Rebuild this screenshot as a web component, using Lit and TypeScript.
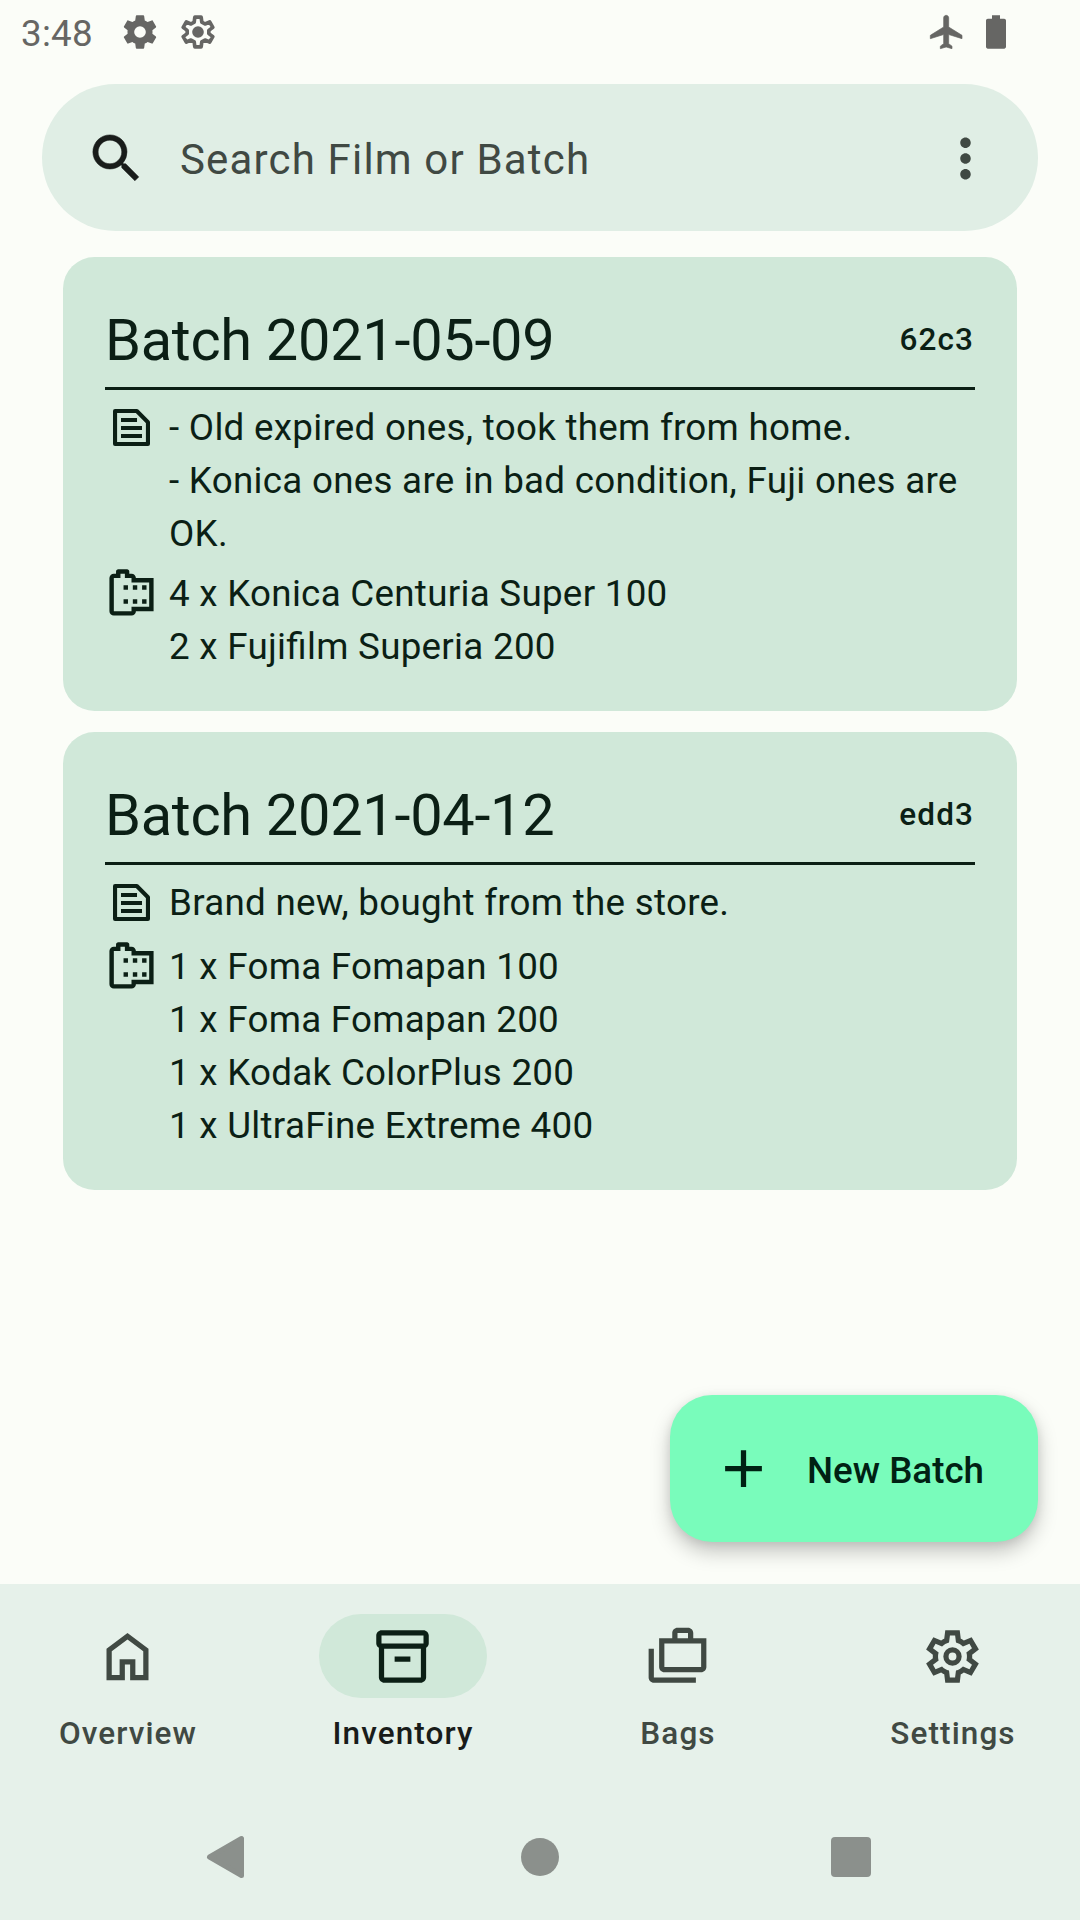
import { LitElement, html, css, svg } from "lit";
import { customElement, property } from "lit/decorators.js";

interface Batch {
  title: string;
  id: string;
  notes: string[];
  films: string[];
}

const BATCHES: Batch[] = [
  {
    title: "Batch 2021-05-09",
    id: "62c3",
    notes: [
      "- Old expired ones, took them from home.",
      "- Konica ones are in bad condition, Fuji ones are OK.",
    ],
    films: ["4 x Konica Centuria Super 100", "2 x Fujifilm Superia 200"],
  },
  {
    title: "Batch 2021-04-12",
    id: "edd3",
    notes: ["Brand new, bought from the store."],
    films: [
      "1 x Foma Fomapan 100",
      "1 x Foma Fomapan 200",
      "1 x Kodak ColorPlus 200",
      "1 x UltraFine Extreme 400",
    ],
  },
];

const GEAR_SOLID =
  "M19.43 12.98c.04-.32.07-.64.07-.98s-.03-.66-.07-.98l2.11-1.65c.19-.15.24-.42.12-.64l-2-3.46c-.12-.22-.39-.3-.61-.22l-2.49 1c-.52-.4-1.08-.73-1.69-.98l-.38-2.65C14.460 2.180 14.250 2 14 2h-4c-.25 0-.46.18-.49.42l-.38 2.65c-.61.25-1.170.59-1.690.98l-2.490-1c-.23-.09-.49 0-.61.22l-2 3.460c-.13.22-.07.49.12.64l2.110 1.650c-.04.32-.07.65-.07.98s.03.66.07.98l-2.110 1.650c-.19.15-.24.42-.12.64l2 3.460c.12.22.39.3.61.22l2.490-1c.52.4 1.080.73 1.690.98l.38 2.650c.03.24.24.42.49.42h4c.25 0 .46-.18.49-.42l.38-2.650c.61-.25 1.170-.59 1.690-.98l2.490 1c.23.09.49 0 .61-.22l2-3.460c.12-.22.07-.49-.12-.64l-2.110-1.650z";

const GEAR_SOFT =
  "M10.100 3.100h3.800l.4 3 1.900 1.100 2.800-1.200 1.900 3.200-2.400 1.850v1.900l2.400 1.850-1.900 3.200-2.800-1.200-1.900 1.100-.4 3h-3.800l-.4-3-1.900-1.100-2.800 1.200-1.900-3.200 2.400-1.850v-1.900L3.100 9.200 5 6l2.800 1.200 1.900-1.100z";

const ICONS = {
  gearSolid: svg`<path fill-rule="evenodd" d="${GEAR_SOLID}M12 15.500a3.500 3.500 0 1 1 0-7 3.500 3.500 0 0 1 0 7z"/>`,
  gearLine: svg`<path d="${GEAR_SOFT}" fill="none" stroke="currentColor" stroke-width="2.200" stroke-linejoin="round"/><circle cx="12" cy="12" r="3.500"/>`,
  plane: svg`<path d="M21 16v-2l-8-5V3.500c0-.83-.67-1.500-1.500-1.500S10 2.670 10 3.500V9l-8 5v2l8-2.500V19l-2 1.500V22l3.500-1 3.500 1v-1.500L13 19v-5.500l8 2.500z" stroke="currentColor" stroke-width=".4"/>`,
  battery: svg`<path d="M16.900 4h-2.500V2H9.600v2H7.100C6.500 4 6 4.500 6 5.100v15.800c0 .6.5 1.100 1.100 1.100h9.800c.6 0 1.100-.5 1.100-1.100V5.100c0-.6-.5-1.100-1.100-1.100z"/>`,
  search: svg`<path d="M15.500 14h-.79l-.28-.27A6.471 6.471 0 0 0 16 9.500 6.500 6.500 0 1 0 9.500 16c1.610 0 3.090-.59 4.230-1.570l.27.28v.79l5 4.990L20.490 19l-4.990-5zm-6 0C7.010 14 5 11.990 5 9.500S7.010 5 9.500 5 14 7.010 14 9.500 11.990 14 9.500 14z" stroke="currentColor" stroke-width=".2"/>`,
  more: svg`<path d="M12 8c1.100 0 2-.9 2-2s-.9-2-2-2-2 .9-2 2 .9 2 2 2zm0 2c-1.100 0-2 .9-2 2s.9 2 2 2 2-.9 2-2-.9-2-2-2zm0 6c-1.100 0-2 .9-2 2s.9 2 2 2 2-.9 2-2-.9-2-2-2z"/>`,
  note: svg`<path d="M4.550 4.550h9.850l5.050 5.050v9.850H4.550z" fill="none" stroke="currentColor" stroke-width="1.850" stroke-linejoin="round"/><path d="M7.250 7.700h7.250v1.800H7.250zM7.250 11.300h9.500v1.800h-9.500zM7.250 14.950h9.500v1.800h-9.500z"/>`,
  roll: svg`<path d="M14 5c0-1.100-.9-2-2-2h-1V2c0-.55-.45-1-1-1H6c-.55 0-1 .45-1 1v1H4c-1.100 0-2 .9-2 2v15c0 1.100.9 2 2 2h8c1.100 0 2-.9 2-2h8V5h-8zm-2 13v2H4V5h3V3h2v2h3v2h8v11h-8z"/><path d="M8.400 8.300h2v2h-2zM12.600 8.300h2v2h-2zM16.800 8.300h2v2h-2zM8.400 14.650h2v2h-2zM12.600 14.650h2v2h-2zM16.800 14.650h2v2h-2z"/>`,
  add: svg`<path d="M19 13h-6v6h-2v-6H5v-2h6V5h2v6h6v2z"/>`,
  home: svg`<path d="M12 3L4 9v12h7v-6h2v6h7V9l-8-6zm6 16h-3v-6H9v6H6v-9l6-4.500 6 4.500v9z"/>`,
  inventory: svg`<path d="M20 2H4c-1 0-2 .9-2 2v3.010c0 .72.43 1.340 1 1.690V20c0 1.100 1.100 2 2 2h14c.9 0 2-.9 2-2V8.700c.57-.35 1-.97 1-1.690V4c0-1.100-1-2-2-2zm-1 18H5V9h14v11zm1-13H4V4h16v3zM9 12h6v2H9z"/>`,
  bags: svg`<path d="M18 5V3c0-1.100-.9-2-2-2h-4c-1.100 0-2 .9-2 2v2H5v11c0 1.100.9 2 2 2h14c1.100 0 2-.9 2-2V5h-5zm-6-2h4v2h-4V3zm9 13H7V7h14v9zM3 9H1v11c0 1.100.9 2 2 2h16v-2H3V9z"/>`,
  settings: svg`<path fill-rule="evenodd" d="M9.250 22l-.4-3.200q-.325-.125-.612-.3-.288-.175-.563-.375L4.700 19.375l-2.750-4.750 2.575-1.950Q4.500 12.500 4.500 12.337v-.675q0-.162.025-.337L1.950 9.375l2.750-4.750 2.975 1.250q.275-.2.575-.375.3-.175.6-.3l.4-3.200h5.500l.4 3.200q.325.125.613.3.287.175.562.375l2.975-1.250 2.750 4.750-2.575 1.950q.025.175.025.337v.675q0 .163-.05.338l2.575 1.950-2.750 4.750-2.950-1.250q-.275.2-.575.375-.3.175-.6.3l-.4 3.200zM11 20h1.975l.35-2.650q.775-.2 1.438-.588.662-.387 1.212-.937l2.475 1.025.975-1.700-2.150-1.625q.125-.35.175-.737.05-.388.05-.788t-.05-.787q-.05-.388-.175-.738l2.150-1.625-.975-1.700-2.475 1.050q-.55-.575-1.212-.963-.663-.387-1.438-.587L13 4h-1.975l-.35 2.650q-.775.2-1.438.587-.662.388-1.212.938L5.550 7.150l-.975 1.700 2.150 1.600q-.125.375-.175.750-.05.375-.05.8 0 .4.050.775t.175.750l-2.150 1.625.975 1.700 2.475-1.050q.55.575 1.212.962.663.388 1.438.588z"/><circle cx="12" cy="12" r="2.500" fill="none" stroke="currentColor" stroke-width="2"/>`,
};

type IconName = keyof typeof ICONS;

@customElement("ui-icon")
export class UiIcon extends LitElement {
  @property() name: IconName = "add";

  static styles = css`
    :host {
      display: block;
      flex: none;
      width: 63px;
      height: 63px;
    }
    .glyph {
      display: block;
      width: 100%;
      height: 100%;
      fill: currentColor;
    }
  `;

  render() {
    return html`<svg class="glyph" viewBox="0 0 24 24">${ICONS[this.name]}</svg>`;
  }
}

@customElement("batch-card")
export class BatchCard extends LitElement {
  @property({ attribute: false }) batch!: Batch;

  static styles = css`
    :host {
      display: block;
      background: #d0e8d9;
      color: #0b1f15;
      border-radius: 31.5px;
      padding: 42px 42px 38px;
    }
    .head {
      display: flex;
      align-items: center;
      justify-content: space-between;
      height: 82px;
      padding-bottom: 6px;
      border-bottom: 3px solid #0b1f15;
      margin-bottom: 11px;
    }
    .title {
      font-size: 57.75px;
      line-height: 74px;
      letter-spacing: -0.3px;
    }
    .id {
      font-size: 31.5px;
      line-height: 42px;
      font-weight: 500;
      letter-spacing: 1.1px;
      padding: 0 1px 1px 0;
    }
    .row {
      display: grid;
      grid-template-columns: 53px 1fr;
      column-gap: 11px;
      font-size: 36.75px;
      line-height: 53px;
      letter-spacing: 0.28px;
      font-feature-settings: "liga" 1;
    }
    .notes {
      min-height: 57px;
      margin-bottom: 7px;
    }
    .small {
      width: 53px;
      height: 53px;
    }
  `;

  render() {
    const b = this.batch;
    return html`
      <div class="head">
        <div class="title">${b.title}</div>
        <div class="id">${b.id}</div>
      </div>
      <div class="row notes">
        <ui-icon class="small" name="note"></ui-icon>
        <div>${b.notes.map((n) => html`<div>${n}</div>`)}</div>
      </div>
      <div class="row">
        <ui-icon class="small" name="roll"></ui-icon>
        <div>${b.films.map((f) => html`<div>${f}</div>`)}</div>
      </div>
    `;
  }
}

const TABS: { label: string; icon: IconName; active?: boolean }[] = [
  { label: "Overview", icon: "home" },
  { label: "Inventory", icon: "inventory", active: true },
  { label: "Bags", icon: "bags" },
  { label: "Settings", icon: "settings" },
];

@customElement("app-root")
export class AppRoot extends LitElement {
  static styles = css`
    :host {
      display: flex;
      flex-direction: column;
      position: relative;
      box-sizing: border-box;
      width: 1080px;
      height: 1920px;
      overflow: hidden;
      background: #fbfdf8;
      font-family: Roboto, "Liberation Sans", sans-serif;
    }
    .status {
      display: flex;
      align-items: center;
      height: 63px;
      padding: 0 64px 0 21px;
      color: #666664;
      flex: none;
    }
    .clock {
      font-size: 36.75px;
      line-height: 43px;
      letter-spacing: 0.25px;
      padding-top: 3px;
      width: 99px;
    }
    .sicon {
      width: 40px;
      height: 40px;
    }
    .gear {
      margin-right: 18px;
    }
    .spacer {
      flex: 1;
    }
    .plane {
      margin-right: 9px;
    }
    .search {
      display: flex;
      align-items: center;
      flex: none;
      height: 147px;
      margin: 21px 42px 0;
      padding: 2px 41px 0 43px;
      box-sizing: border-box;
      border-radius: 73.5px;
      background: #e0eee5;
      color: #191c1a;
    }
    .hint {
      flex: 1;
      margin-left: 32px;
      padding-top: 2px;
      font-size: 42px;
      line-height: 49px;
      letter-spacing: 1.17px;
      color: #404943;
    }
    .menu {
      color: #404943;
    }
    .list {
      display: flex;
      flex-direction: column;
      gap: 21px;
      padding: 26px 63px 0;
      flex: 1;
    }
    .fab {
      position: absolute;
      right: 42px;
      top: 1395px;
      width: 368px;
      height: 147px;
      box-sizing: border-box;
      padding-left: 42px;
      display: flex;
      align-items: center;
      gap: 32px;
      border-radius: 42px;
      background: #79fcbb;
      color: #002113;
      font-size: 36.75px;
      font-weight: 500;
      box-shadow: 0 10px 20px rgba(0, 0, 0, 0.22), 0 2px 10px rgba(0, 0, 0, 0.08);
    }
    .fab-label {
      padding-top: 4px;
      line-height: 43px;
    }
    .nav {
      display: grid;
      grid-template-columns: repeat(4, 1fr);
      column-gap: 21px;
      height: 210px;
      padding-left: 1px;
      flex: none;
      position: relative;
      background: #e6f1ea;
      color: #404943;
    }
    .tab {
      display: flex;
      flex-direction: column;
      align-items: center;
      padding-top: 30px;
      font-size: 31.5px;
      line-height: 42px;
      font-weight: 500;
      letter-spacing: 1.1px;
    }
    .pill {
      display: flex;
      align-items: center;
      justify-content: center;
      width: 168px;
      height: 84px;
      padding-right: 2px;
      box-sizing: border-box;
      border-radius: 42px;
      margin-bottom: 15px;
    }
    .active {
      color: #191c1a;
    }
    .active .pill {
      background: #d0e8d9;
      color: #0b1f15;
    }
    .system {
      display: flex;
      justify-content: space-between;
      flex: none;
      height: 126px;
      padding: 0 205px 0 202px;
      box-sizing: border-box;
      align-items: center;
      background: #e6f1ea;
    }
    .key {
      display: block;
      width: 48px;
      height: 48px;
      fill: #8b908c;
    }
  `;

  render() {
    return html`
      <div class="status">
        <div class="clock">3:48</div>
        <ui-icon class="sicon gear" name="gearSolid"></ui-icon>
        <ui-icon class="sicon" name="gearLine"></ui-icon>
        <div class="spacer"></div>
        <ui-icon class="sicon plane" name="plane"></ui-icon>
        <ui-icon class="sicon" name="battery"></ui-icon>
      </div>
      <div class="search">
        <ui-icon name="search"></ui-icon>
        <div class="hint">Search Film or Batch</div>
        <ui-icon class="menu" name="more"></ui-icon>
      </div>
      <div class="list">
        ${BATCHES.map((b) => html`<batch-card .batch=${b}></batch-card>`)}
      </div>
      <div class="fab">
        <ui-icon name="add"></ui-icon>
        <div class="fab-label">New Batch</div>
      </div>
      <div class="nav">
        ${TABS.map(
          (t) => html`
            <div class="tab ${t.active ? "active" : ""}">
              <div class="pill"><ui-icon name=${t.icon}></ui-icon></div>
              <div>${t.label}</div>
            </div>
          `
        )}
      </div>
      <div class="system">
        <svg class="key" viewBox="0 0 48 48"><path d="M7.500 24L39.500 5.500v37z" stroke="#8b908c" stroke-width="5" stroke-linejoin="round"/></svg>
        <svg class="key" viewBox="0 0 48 48"><circle cx="25" cy="24" r="19"/></svg>
        <svg class="key" viewBox="0 0 48 48"><rect x="4" y="4" width="40" height="40" rx="4"/></svg>
      </div>
    `;
  }
}
